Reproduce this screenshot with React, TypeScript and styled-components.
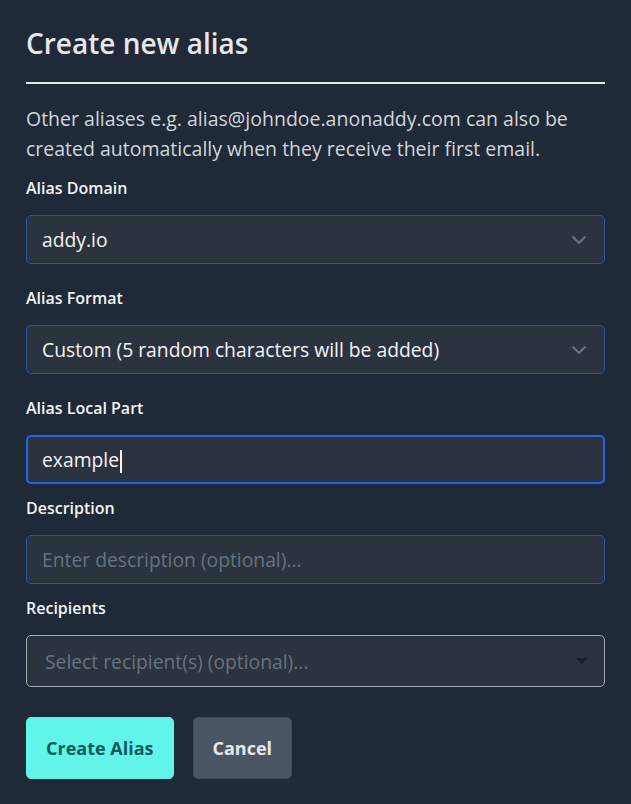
import { createGlobalStyle, styled } from 'styled-components';

const GlobalStyle = createGlobalStyle`
    html, body {
        margin: 0;
        padding: 0;
        background: #1f2937;
    }
    body {
        font-family: 'Open Sans', 'Liberation Sans', sans-serif;
        -webkit-font-smoothing: antialiased;
    }
    * {
        box-sizing: border-box;
    }
`;

const Panel = styled.div`
    width: 631px;
    min-height: 804px;
    padding: 24px 26px 26px;
    background: #1f2937;
    color: #e5e7eb;
`;

const Title = styled.h2`
    margin: 0;
    padding-bottom: 20px;
    border-bottom: 2px solid #e5e7eb;
    font-size: 28px;
    line-height: 38px;
    font-weight: 600;
    color: #e5e7eb;
`;

const Intro = styled.p`
    margin: 20px 0 0;
    font-size: 19.5px;
    line-height: 30px;
    color: #d1d5db;
`;

const Field = styled.div<{ $gap?: number }>`
    display: flex;
    flex-direction: column;
    margin-top: ${(p) => p.$gap ?? 12}px;
`;

const Label = styled.label`
    font-size: 16px;
    line-height: 24px;
    font-weight: 600;
    color: #f3f4f6;
    margin-bottom: 15px;
`;

const Box = styled.div<{ $focused?: boolean }>`
    display: flex;
    align-items: center;
    height: 49px;
    padding: 0 ${(p) => (p.$focused ? 16 : 17)}px 0 ${(p) => (p.$focused ? 14 : 15)}px;
    background: #2a333e;
    border: ${(p) => (p.$focused ? '2px solid #2563eb' : '1px solid #2d5597')};
    border-radius: 5px;
    font-size: 19.3px;
    color: #f3f4f6;
`;

const Value = styled.span`
    flex: 1;
    white-space: nowrap;
`;

const Caret = styled.span`
    display: inline-block;
    width: 2px;
    height: 23px;
    margin-left: 1px;
    background: #f3f4f6;
    vertical-align: middle;
`;

const TextInput = styled.input`
    height: 49px;
    padding: 0 15px;
    background: #2a333e;
    border: 1px solid #2d5597;
    border-radius: 5px;
    font-family: inherit;
    font-size: 19.3px;
    color: #f3f4f6;
    outline: none;

    &::placeholder {
        color: #687280;
    }
`;

const MultiSelect = styled.div`
    display: flex;
    align-items: center;
    height: 52px;
    padding: 0 16px 0 18px;
    background: #2a333e;
    border: 1px solid #a3aab5;
    border-radius: 5px;
    font-size: 19.3px;
    color: #687280;
`;

const Actions = styled.div`
    display: flex;
    gap: 19px;
    margin-top: 30px;
`;

const Button = styled.button<{ $primary?: boolean }>`
    height: 62px;
    padding: 0 19px;
    border-radius: 5px;
    font-family: inherit;
    font-size: 18px;
    font-weight: 700;
    cursor: pointer;
    background: ${(p) => (p.$primary ? '#61f5e9' : '#4b5563')};
    color: ${(p) => (p.$primary ? '#0c5a5c' : '#e5e7eb')};
    border: 1px solid ${(p) => (p.$primary ? '#61f5e9' : '#3f4956')};
`;

function Chevron() {
    return (
        <svg width="16" height="10" viewBox="0 0 16 10" fill="none">
            <path
                d="M2 2l6 6 6-6"
                stroke="#6b7280"
                strokeWidth="2"
                strokeLinecap="round"
                strokeLinejoin="round"
            />
        </svg>
    );
}

function DropTriangle() {
    return (
        <svg width="12" height="7" viewBox="0 0 12 7">
            <path d="M0 0h12L6 6.5z" fill="#1a212b" />
        </svg>
    );
}

interface SelectProps {
    value: string;
}

function SelectBox(props: SelectProps) {
    return (
        <Box>
            <Value>{props.value}</Value>
            <Chevron />
        </Box>
    );
}

export default function App() {
    return (
        <>
            <GlobalStyle />
            <Panel>
                <Title>Create new alias</Title>
                <Intro>
                    Other aliases e.g. alias@johndoe.anonaddy.com can also be
                    created automatically when they receive their first email.
                </Intro>

                <Field>
                    <Label>Alias Domain</Label>
                    <SelectBox value="addy.io" />
                </Field>

                <Field $gap={22}>
                    <Label>Alias Format</Label>
                    <SelectBox value="Custom (5 random characters will be added)" />
                </Field>

                <Field $gap={22}>
                    <Label>Alias Local Part</Label>
                    <Box $focused>
                        <Value>
                            example
                            <Caret />
                        </Value>
                    </Box>
                </Field>

                <Field>
                    <Label>Description</Label>
                    <TextInput placeholder="Enter description (optional)..." />
                </Field>

                <Field>
                    <Label>Recipients</Label>
                    <MultiSelect>
                        <Value>Select recipient(s) (optional)...</Value>
                        <DropTriangle />
                    </MultiSelect>
                </Field>

                <Actions>
                    <Button $primary>Create Alias</Button>
                    <Button>Cancel</Button>
                </Actions>
            </Panel>
        </>
    );
}
